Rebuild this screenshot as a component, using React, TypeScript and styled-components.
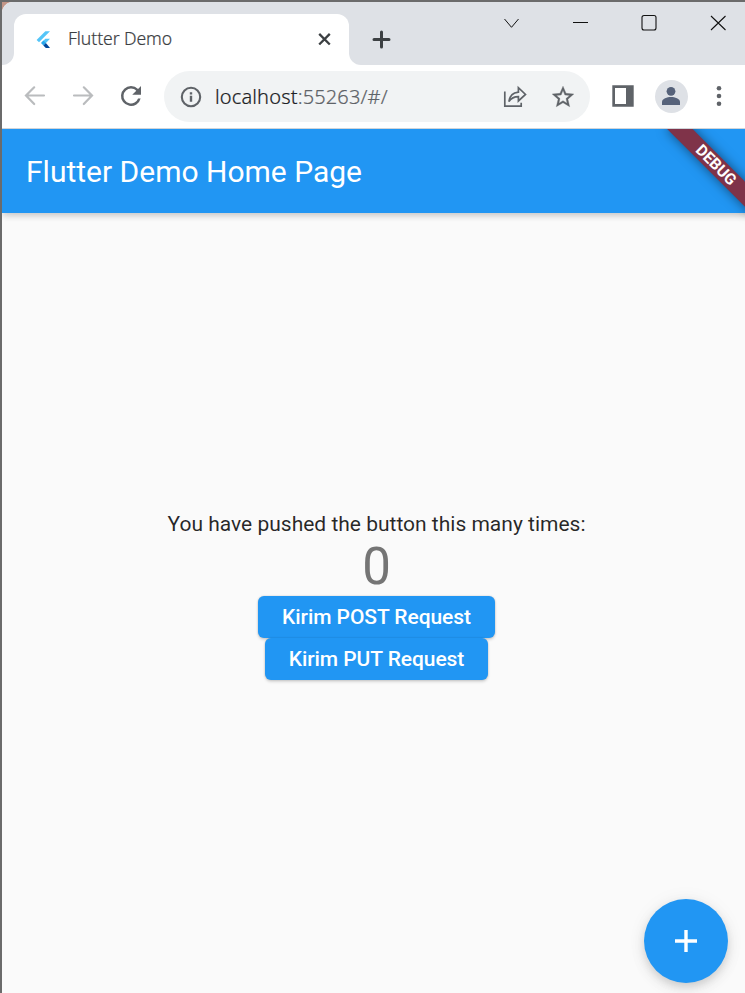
import React from "react";
import styled, { createGlobalStyle } from "styled-components";

const Global = createGlobalStyle`
  * { box-sizing: border-box; }
  body { margin: 0; overflow: hidden; }
  button { border: 0; padding: 0; background: none; font: inherit; color: inherit; display: flex; align-items: center; justify-content: center; }
  svg { display: block; overflow: visible; }
`;

const strip = "#dee1e6";
const blue = "#2196f3";

const Desktop = styled.div`
  width: 745px;
  height: 993px;
  padding: 2px 0 0 2px;
  overflow: hidden;
  background: linear-gradient(#6b6b6b, #6b6b6b) 0 0 / 100% 2px no-repeat,
    linear-gradient(#6b6b6b, #6b6b6b) 0 0 / 2px 100% no-repeat, #c39586;
`;

const Browser = styled.div`
  width: 750px;
  height: 1005px;
  background: #fff;
  border-top-left-radius: 11px;
  overflow: hidden;
  display: flex;
  flex-direction: column;
`;

const TabStrip = styled.div`
  height: 63px;
  width: 743px;
  display: flex;
  flex: none;
`;

const Gutter = styled.div`
  width: 12px;
  background: ${strip};
  border-bottom-right-radius: 12px;
`;

const TabHolder = styled.div`
  width: 335px;
  padding-top: 12px;
  background: linear-gradient(${strip} 30px, #fff 30px);
`;

const Tab = styled.div`
  height: 51px;
  border-radius: 12px 12px 0 0;
  background: #fff;
  display: flex;
  align-items: center;
  padding: 0 16px 0 18px;
`;

const TabTitle = styled.span`
  flex: 1;
  margin-left: 12px;
  padding-bottom: 3px;
  font: 400 17.6px/24px "Noto Sans", sans-serif;
  font-weight: 350;
  letter-spacing: -0.08px;
  -webkit-text-stroke: 0.2px currentColor;
  color: #3c4043;
`;

const StripRest = styled.div`
  flex: 1;
  display: flex;
  justify-content: space-between;
  background: ${strip};
  border-bottom-left-radius: 12px;
`;

const NewTab = styled.button`
  width: 64px;
  height: 51px;
  margin-top: 12px;
`;

const WindowButtons = styled.div`
  display: flex;
  height: 42px;
  margin-right: -8px;
`;

const WindowButton = styled.button`
  width: 69px;
  color: #111;
`;

const Toolbar = styled.div`
  height: 64px;
  width: 743px;
  flex: none;
  display: flex;
  align-items: center;
  padding: 0 2px 1px 9px;
  border-bottom: 1px solid #d0d4d9;
`;

const ToolButton = styled.button<{ $dim?: boolean }>`
  width: 48px;
  height: 48px;
  flex: none;
  color: ${(p) => (p.$dim ? "#babcbe" : "#5f6368")};
`;

const AddressBar = styled.div`
  width: 426px;
  height: 51px;
  margin-left: 9px;
  border-radius: 26px;
  background: #f1f3f4;
  display: flex;
  align-items: center;
  padding: 2px 3px 0 16px;
  color: #5f6368;
`;

const Url = styled.span`
  flex: 1;
  margin-left: 13px;
  font: 400 20px/28px "Noto Sans", sans-serif;
  font-weight: 350;
  letter-spacing: 0.15px;
  -webkit-text-stroke: 0.2px currentColor;
  color: #5f6368;
`;

const Host = styled.span`
  color: #202124;
`;

const SidePanelButton = styled(ToolButton)`
  margin-left: 9px;
`;

const Avatar = styled.div`
  width: 33px;
  height: 33px;
  border-radius: 50%;
  background: ${strip};
  color: #56627a;
  display: flex;
  align-items: center;
  justify-content: center;
`;

const View = styled.div`
  flex: 1;
  position: relative;
  overflow: hidden;
  background: #fafafa;
  font-family: Roboto, sans-serif;
  display: flex;
  flex-direction: column;
`;

const AppBar = styled.header`
  height: 84px;
  flex: none;
  display: flex;
  align-items: center;
  padding: 2px 24px 0 24px;
  background: ${blue};
  color: #fff;
  font-size: 30px;
  font-weight: 400;
  line-height: 36px;
  box-shadow: 0 3px 6px -1px rgba(0, 0, 0, 0.14), 0 4px 7px rgba(0, 0, 0, 0.05), 0 1px 10px rgba(0, 0, 0, 0.05);
`;

const Counter = styled.main`
  flex: 1;
  padding-top: 299px;
  padding-right: 1px;
  display: flex;
  flex-direction: column;
  align-items: center;
`;

const Message = styled.div`
  font-size: 21px;
  line-height: 24px;
  color: rgba(0, 0, 0, 0.85);
`;

const Count = styled.div`
  height: 60px;
  font-size: 51px;
  line-height: 62px;
  color: #757575;
`;

const Raised = styled.button`
  height: 42px;
  padding: 0 24px;
  border-radius: 6px;
  background: ${blue};
  color: #fff;
  font-size: 21px;
  font-weight: 500;
  letter-spacing: -0.07px;
  box-shadow: 0 2px 3px rgba(0, 0, 0, 0.14), 0 0 2px rgba(0, 0, 0, 0.2);
`;

const Fab = styled.button`
  position: absolute;
  right: 24px;
  bottom: 24px;
  width: 84px;
  height: 84px;
  border-radius: 50%;
  background: ${blue};
  box-shadow: 0 4px 8px -1px rgba(0, 0, 0, 0.11), 0 6px 15px rgba(0, 0, 0, 0.08), 0 1px 20px rgba(0, 0, 0, 0.05);
`;

const DebugBanner = styled.div`
  position: absolute;
  right: -60px;
  top: 42px;
  width: 120px;
  height: 18px;
  transform-origin: 60px -42px;
  transform: rotate(45deg);
  background: #7f3349;
  box-shadow: 0 0 12px rgba(0, 0, 0, 0.5);
  color: #fff;
  text-align: center;
  font-size: 15.6px;
  line-height: 18px;
  font-weight: 700;
`;

const FlutterLogo = () => (
  <svg width="24" height="24" viewBox="0 0 24 24">
    <path d="M13.3 3.2h4.7L7 14.3 4.6 12z" fill="#54c5f8" />
    <path d="M13.3 10.8H18l-4.3 4.4-4-.6z" fill="#54c5f8" />
    <path d="M9 14.9l2.4-2.3 2.5 2.3-2.5 2.5z" fill="#29a8ec" />
    <path d="M11.4 17.4l2.5-2.4 4.1 5h-4.2z" fill="#01479b" />
  </svg>
);

export default function App() {
  return (
    <>
      <Global />
      <Desktop>
        <Browser>
          <TabStrip>
            <Gutter />
            <TabHolder>
              <Tab>
                <FlutterLogo />
                <TabTitle>Flutter Demo</TabTitle>
                <button aria-label="Close tab">
                  <svg width="17" height="17" viewBox="0 0 17 17" stroke="#3c4043" strokeWidth="2.3">
                    <path d="M3.2 2.9l10.6 10.6M13.8 2.9L3.2 13.5" />
                  </svg>
                </button>
              </Tab>
            </TabHolder>
            <StripRest>
              <NewTab aria-label="New tab">
                <svg width="18" height="18" viewBox="0 0 18 18" stroke="#3c4043" strokeWidth="3" strokeLinecap="round">
                  <path d="M9.5 1v15M2 8.5h15" />
                </svg>
              </NewTab>
              <WindowButtons>
                <WindowButton aria-label="Search tabs">
                  <svg width="16" height="16" viewBox="0 0 16 16" fill="none" stroke="currentColor" strokeWidth="1">
                    <path d="M.5 4l7 8.3 7-8.3" />
                  </svg>
                </WindowButton>
                <WindowButton aria-label="Minimize">
                  <svg width="16" height="16" viewBox="0 0 16 16" stroke="currentColor">
                    <path d="M0 7.5h15" />
                  </svg>
                </WindowButton>
                <WindowButton aria-label="Maximize">
                  <svg width="16" height="16" viewBox="0 0 16 16" fill="none" stroke="currentColor" strokeWidth="1.1">
                    <rect x="0" y="0.5" width="14" height="14.5" rx="2" />
                  </svg>
                </WindowButton>
                <WindowButton aria-label="Close">
                  <svg width="16" height="16" viewBox="0 0 16 16" stroke="currentColor" strokeWidth="1.1">
                    <path d="M0 1l14.5 14M14.5 1L0 15" />
                  </svg>
                </WindowButton>
              </WindowButtons>
            </StripRest>
          </TabStrip>

          <Toolbar>
            <ToolButton $dim aria-label="Back">
              <svg width="20" height="20" viewBox="0 0 20 20" fill="none" stroke="currentColor" strokeWidth="2.2" strokeLinecap="round">
                <path d="M19 9.5H1.5M9.2 1.3L1 9.5l8.2 8.5" />
              </svg>
            </ToolButton>
            <ToolButton $dim aria-label="Forward">
              <svg width="20" height="20" viewBox="0 0 20 20" fill="none" stroke="currentColor" strokeWidth="2.2" strokeLinecap="round">
                <path d="M1 9.5h17.5M10.8 1.3L19 9.5 10.8 18" />
              </svg>
            </ToolButton>
            <ToolButton aria-label="Reload">
              <svg width="30" height="30" viewBox="0 0 24 24" fill="currentColor">
                <path d="M17.65 6.35A7.95 7.95 0 0 0 12 4a8 8 0 1 0 7.73 10h-2.08A6 6 0 1 1 12 6c1.66 0 3.14.69 4.22 1.78L13 11h7V4z" />
              </svg>
            </ToolButton>
            <AddressBar>
              <svg width="22" height="22" viewBox="0 0 22 22" fill="none" stroke="currentColor" strokeWidth="2.1">
                <circle cx="11" cy="11" r="9.2" />
                <path d="M11 9.8v6M11 6.2v2.2" strokeWidth="2.4" />
              </svg>
              <Url>
                <Host>localhost</Host>:55263/#/
              </Url>
              <ToolButton aria-label="Share">
                <svg width="24" height="24" viewBox="0 0 24 24" fill="none" stroke="currentColor" strokeWidth="1.7">
                  <path d="M1.8 6.5v14.7h16.4v-3.5" />
                  <path d="M5.9 16.5C6.6 10.9 9.9 7.6 15.4 7.1V2.7l7.1 6.8-7.1 6.5v-4.4c-4.2 0-7.2 1.4-9.5 4.9z" />
                </svg>
              </ToolButton>
              <ToolButton aria-label="Bookmark">
                <svg width="26" height="26" viewBox="0 0 24 24" fill="currentColor" stroke="currentColor" strokeWidth="0.3">
                  <path d="M22 9.24l-7.19-.62L12 2 9.19 8.63 2 9.24l5.46 4.73L5.82 21 12 17.27 18.18 21l-1.63-7.03zM12 15.4l-3.76 2.27 1-4.28-3.32-2.88 4.38-.38L12 6.1l1.71 4.04 4.38.38-3.32 2.88 1 4.28z" />
                </svg>
              </ToolButton>
            </AddressBar>
            <SidePanelButton aria-label="Side panel">
              <svg width="22" height="22" viewBox="0 0 22 22">
                <path fill="currentColor" fillRule="evenodd" d="M.3.3h21.4v21.4H.3zM3 3v16h11V3z" />
              </svg>
            </SidePanelButton>
            <ToolButton aria-label="Profile">
              <Avatar>
                <svg width="18" height="18" viewBox="0 0 18 18" fill="currentColor">
                  <circle cx="9" cy="4.3" r="4.4" />
                  <path d="M0 18v-3c0-3.3 5.2-4.9 9-4.9s9 1.6 9 4.9v3z" />
                </svg>
              </Avatar>
            </ToolButton>
            <ToolButton aria-label="Menu">
              <svg width="6" height="20" viewBox="0 0 6 20" fill="currentColor">
                <circle cx="3" cy="2.3" r="2.3" />
                <circle cx="3" cy="10" r="2.3" />
                <circle cx="3" cy="17.7" r="2.3" />
              </svg>
            </ToolButton>
          </Toolbar>

          <View>
            <AppBar>Flutter Demo Home Page</AppBar>
            <Counter>
              <Message>You have pushed the button this many times:</Message>
              <Count>0</Count>
              <Raised>Kirim POST Request</Raised>
              <Raised>Kirim PUT Request</Raised>
            </Counter>
            <Fab aria-label="Increment">
              <svg width="22" height="22" viewBox="0 0 22 22" stroke="#fff" strokeWidth="3.4">
                <path d="M11 0v22M0 11h22" />
              </svg>
            </Fab>
            <DebugBanner>DEBUG</DebugBanner>
          </View>
        </Browser>
      </Desktop>
    </>
  );
}
